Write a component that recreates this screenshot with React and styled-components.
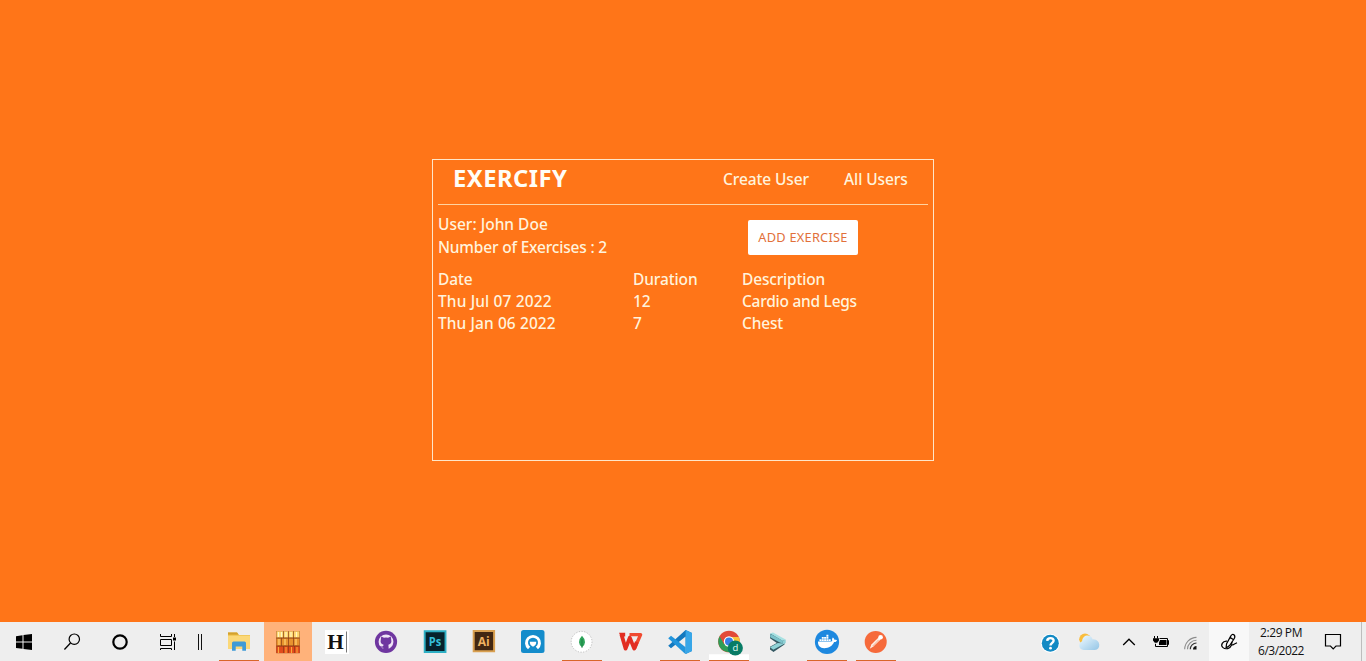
import React from "react";
import styled, { createGlobalStyle } from "styled-components";
import { FaDocker } from "react-icons/fa";

const GlobalStyle = createGlobalStyle`
  * { box-sizing: border-box; }
  body { margin: 0; background: #ff7518; overflow: hidden; }
  svg { display: block; }
`;

const Screen = styled.div`
  display: flex;
  flex-direction: column;
  width: 1366px;
  height: 661px;
  background: #ff7518;
  font-family: "Noto Sans", "Open Sans", sans-serif;
`;

const Page = styled.main`
  flex: 1;
  display: flex;
  justify-content: center;
  padding-top: 159px;
`;

const Card = styled.section`
  width: 502px;
  height: 302px;
  padding: 0 5px;
  border: 1px solid #ffe6c8;
  color: #fff3dc;
  font-size: 15.5px;
  font-weight: 500;
`;

const Header = styled.header`
  display: flex;
  align-items: center;
  height: 45px;
  padding: 0 20px 0 15px;
  border-bottom: 1px solid #ffd3a0;
`;

const Brand = styled.h1`
  flex: 1;
  margin: 0;
  padding-bottom: 8px;
  color: #fffdf6;
  font-size: 23.8px;
  line-height: 32px;
  font-weight: 700;
  letter-spacing: 0.45px;
`;

const NavLink = styled.a`
  width: ${(p) => p.$width}px;
  padding-bottom: 6px;
  line-height: 22px;
  white-space: nowrap;
  letter-spacing: ${(p) => p.$track || 0}px;
`;

const Summary = styled.div`
  display: flex;
  height: 63px;
  padding-top: 8px;
`;

const Facts = styled.div`
  width: 310px;
`;

const Fact = styled.div`
  height: 23px;
  line-height: 23px;
  white-space: nowrap;
  letter-spacing: ${(p) => p.$track || 0}px;
`;

const AddButton = styled.button`
  width: 110px;
  height: 35px;
  margin-top: 7px;
  padding: 0 0 2px;
  border: 0;
  border-radius: 2px;
  background: #fff;
  color: #e2703a;
  font-family: inherit;
  font-size: 12.8px;
  letter-spacing: 0.24px;
  white-space: nowrap;
`;

const Table = styled.div`
  display: grid;
  grid-template-columns: 195px 109px 1fr;
  grid-auto-rows: 22px;
  line-height: 22px;
`;

const Cell = styled.span`
  white-space: nowrap;
  letter-spacing: ${(p) => p.$track || 0}px;
`;

const Taskbar = styled.footer`
  display: flex;
  height: 39px;
  background: #eeeeee;
`;

const SystemButtons = styled.div`
  display: flex;
  width: 215px;
`;

const Apps = styled.div`
  display: flex;
  gap: 1px;
  flex: 1;
`;

const Slot = styled.div`
  display: flex;
  justify-content: center;
  width: ${(p) => p.$width || 48}px;
  height: 39px;
  background: ${(p) => p.$bg || "transparent"};
`;

const AppSlot = styled(Slot)`
  background: ${(p) =>
    p.$active ? "#ffb27a" : p.$running ? "linear-gradient(#d9662a, #d9662a) center bottom / 40px 1px no-repeat" : "transparent"};
`;

const Tray = styled.div`
  display: flex;
`;

const Clock = styled.div`
  width: 64px;
  padding-top: 2px;
  font-family: "Open Sans", "Noto Sans", sans-serif;
  font-size: 12px;
  line-height: 18px;
  color: #111;
  text-align: center;
`;

const ClockLine = styled.div`
  white-space: nowrap;
  letter-spacing: ${(p) => p.$track || 0}px;
`;

const ShowDesktop = styled.div`
  width: 5px;
  border-left: 1px solid #bdbdbd;
`;

/* Every glyph shares one coordinate system whose origin is the slot centre. */
const Glyph = ({ w = 48, children }) => (
  <svg width={w} height="39" viewBox={`${-w / 2} -20 ${w} 39`} fill="none">
    {children}
  </svg>
);

const Start = () => (
  <Glyph>
    <path fill="#000" d="M-8-5.8-1.5-6.7V-.5H-8ZM-.5-6.9 8-8V-.5H-.5ZM-8 .5h6.5v6.3L-8 5.9ZM-.5.5H8V8L-.5 6.9Z" />
  </Glyph>
);

const Search = () => (
  <Glyph>
    <circle cx="2.3" cy="-2.8" r="5.2" stroke="#000" strokeWidth="1.2" />
    <path d="M-1.5 1-7.6 7.5" stroke="#000" strokeWidth="1.3" />
  </Glyph>
);

const Cortana = () => (
  <Glyph>
    <circle r="6.7" stroke="#000" strokeWidth="2.2" />
  </Glyph>
);

const TaskView = () => (
  <Glyph>
    <path d="M-7.5-8v2.5h11V-8M-7.5-2.5h11v6h-11ZM-7.5 8V6.5h11V8M6.5-8v3M6.5-.5V8" stroke="#000" strokeWidth="1" />
    <path d="M5-4.5h3v3H5Z" fill="#000" />
  </Glyph>
);

const Bars = () => (
  <Glyph w={16}>
    <path d="M-1.5-8V8M1.5-8V8" stroke="#111" strokeWidth="1" />
  </Glyph>
);

const Explorer = () => (
  <Glyph>
    <path d="M-11-9.5h9l2 2.5h11V6h-22Z" fill="#e8b73f" />
    <path d="M-11-6.5H11V7h-22Z" fill="#fbd878" />
    <path d="M-11-9.5h9l1.5 2h-10.5Z" fill="#d3a12e" />
    <path d="M-7 8.8V1q0-1.5 1.5-1.5h11Q7 -.5 7 1v7.8H3.3V4.5h-6.6v4.3Z" fill="#3f9bd6" />
  </Glyph>
);

const Archive = () => (
  <Glyph>
    <path d="M-11.8-10.8h23.6v22h-23.6Z" fill="#8a3a14" />
    <path d="M-11.5-10.8h6.8v6.3h-6.8ZM-4-10.8h4v6.3h-4ZM.7-10.8h4.6v6.3H.7ZM6-10.8h5.5v6.3H6Z" fill="#ffd66c" />
    <path d="M-11.5-3.4h4.8v6.8h-4.8ZM-6-3.4h6v6.8h-6ZM.7-3.4h4.6v6.8H.7ZM6-3.4h5.5v6.8H6Z" fill="#e8922f" />
    <path d="M-11.5 4.6h6.8v6.4h-6.8ZM-4 4.6h4V11h-4ZM.7 4.6h5.6V11H.7ZM7 4.6h4.5V11H7Z" fill="#e24a1c" />
    <path d="M-9.5-10v5M-6.5-10v5M-2-10v5M3-10v5M8.5-10v5" stroke="#fff4c2" strokeWidth="1.2" />
    <path d="M-9-3v6M-3-3v6M8-3v6" stroke="#ffd272" strokeWidth="1.2" />
    <path d="M-9.5 5v6M-2 5v6M3.5 5v6M9 5v6" stroke="#f9aa38" strokeWidth="1.1" />
  </Glyph>
);

const Hemingway = () => (
  <Glyph>
    <path d="M-12-12h24v24h-24Z" fill="#fff" />
    <text x="-9.8" y="7.4" fill="#111" fontFamily="Liberation Serif, serif" fontWeight="700" fontSize="21.5" textLength="16.5" lengthAdjust="spacingAndGlyphs">H</text>
    <path d="M9.5-10.5v21" stroke="#777" />
  </Glyph>
);

const GitHubDesktop = () => (
  <Glyph>
    <circle cy="-.2" r="11.1" fill="#6f36a0" />
    <circle cy="-.2" r="7.4" fill="#efe4f6" />
    <path d="M-4.8-5.5-2-4.2q2-.5 4 0l2.8-1.3.4 3.3Q6.2 1.6 2.4 2.7L2.8 8h-5.6V5.6q-2.8.6-3.6-1.8 1.6 1.4 3.6.2l.4-1.3q-3.8-1.1-2.8-4.9Z" fill="#6f36a0" />
  </Glyph>
);

const Photoshop = () => (
  <Glyph>
    <path d="M-10.3-10.8h20.8v20.8h-20.8Z" fill="#06222c" stroke="#2dafc4" strokeWidth="1.9" />
    <text x="-6.3" y="4" fill="#35bfd9" fontFamily="Open Sans, sans-serif" fontWeight="700" fontSize="11.5" textLength="12.5" lengthAdjust="spacingAndGlyphs">Ps</text>
  </Glyph>
);

const Illustrator = () => (
  <Glyph>
    <path d="M-10.3-11h20.4v20.2h-20.4Z" fill="#422712" stroke="#d9a050" strokeWidth="2" />
    <text x="-6.2" y="3.6" fill="#efb261" fontFamily="Open Sans, sans-serif" fontWeight="700" fontSize="12" textLength="12" lengthAdjust="spacingAndGlyphs">Ai</text>
  </Glyph>
);

const BlueApp = () => (
  <Glyph>
    <rect x="-12" y="-12" width="23.5" height="23" rx="2.5" fill="#148ccb" />
    <path d="M-5 7.2A8 8 0 1 1 5 7.2L2.8 4.8A5 5 0 1 0-2.8 4.8Z" fill="#fff" />
    <path d="M-3.2-.2h6.4q.3 3.4-3.2 4.9Q-3.5 3.2-3.2-.2Z" fill="#fff" />
  </Glyph>
);

const Mongo = () => (
  <Glyph>
    <circle cx="-.4" cy="-.2" r="10.4" fill="#fff" stroke="#a8a8a8" strokeWidth=".7" strokeDasharray="1.2 1.5" />
    <path d="M0-6.3Q3.3-3 3 .2 2.8 3.5 0 5.2-2.8 3.5-3 .2-3.3-3 0-6.3Z" fill="#2da45a" />
    <path d="M0-3V6" stroke="#16733b" strokeWidth=".7" />
  </Glyph>
);

const Wps = () => (
  <Glyph>
    <path d="M-1.5-7.4H9.6L3.6 6.3" stroke="#f04a30" strokeWidth="3.4" strokeLinejoin="round" />
    <path d="M-12-9.2h6.2v3.6h-4.6Z" fill="#e22d22" />
    <path d="M-9.6-7.6-5.4 6.6-1.2-4.2 3.2 6.6 5.8 0" stroke="#e22d22" strokeWidth="3.8" strokeLinejoin="round" />
  </Glyph>
);

const VsCode = () => (
  <Glyph>
    <path d="M5.6-12 12-9V9L5.6 12V-5.5L-9 6.2l-2.8-2.4Z" fill="#1479bf" />
    <path d="m-11.8-3.8L-9-6.2 5.6 5.2V12L4.5 11.2Z" fill="#2295dc" />
    <path d="M5.6-12 12-9V9L5.6 12Z" fill="#37a6e8" />
  </Glyph>
);

const Chrome = () => (
  <Glyph>
    <path d="M-20 12.3h40V18h-40Z" fill="#fff" />
    <circle cy="-.5" r="10.8" fill="#e24a38" />
    <path d="M-9.4-5.8A10.8 10.8 0 0 0 0 10.3L5 2H-5Z" fill="#2e9d57" />
    <path d="M9.8-5A10.8 10.8 0 0 1 0 10.3L4.6 2 0-5Z" fill="#f8c53c" />
    <circle cy="-.5" r="5.2" fill="#fff" />
    <circle cy="-.5" r="4" fill="#377fe5" />
    <circle cx="6.3" cy="6" r="7.6" fill="#087c66" />
    <text x="6.3" y="9.3" fill="#e5fff8" fontFamily="Open Sans, sans-serif" fontSize="9.5" textAnchor="middle">d</text>
  </Glyph>
);

const Terminal = () => (
  <Glyph>
    <path d="m-6.5-8.5 13 6.8v4.2L-4.5 10-8 7.6V4.8L-1.2 1-8-3.8V-8Z" fill="#355963" />
    <path d="M-7.8-8.6-5-9.4 7.7-2.6 4.8-1Z" fill="#a7e1e2" />
    <path d="m-7.8-8.2 12.6 7v2.8l-3-1L-7.8-4.8Z" fill="#7cc3cb" />
    <path d="M4.8-1 7.7-2.6V1L-4.7 7.7-8 5.2-.2 1l5 .5Z" fill="#8fd2d6" />
  </Glyph>
);

const Docker = () => (
  <Glyph>
    <circle cy="-.1" r="12.1" fill="#1d88df" />
    <FaDocker x="-9" y="-10" color="#fff" size="19" />
  </Glyph>
);

const Postman = () => (
  <Glyph>
    <circle cx="-.3" cy="-.1" r="11" fill="#f66a3b" />
    <path d="M-6.2 6.8-4.6 2.6 2.5-4.5 4.6-2.4-2.6 4.6Z" fill="#fff0e7" />
    <circle cx="4.6" cy="-4.7" r="2.3" fill="#fff" />
    <path d="m-3.5 4.2 6-6.2" stroke="#ee9b75" strokeWidth=".8" />
  </Glyph>
);

const Help = () => (
  <Glyph w={38}>
    <circle cx=".3" cy="1.3" r="9.6" fill="#fff" />
    <circle cx=".3" cy="1.3" r="8.5" fill="#138ac4" />
    <path d="M-2.8-1.2C-2.5-4.8 3.7-4.7 3.6-1.3 3.5.8.5 1 .5 3.6" stroke="#fff" strokeWidth="2.4" />
    <circle cx=".5" cy="6.2" r="1.4" fill="#fff" />
  </Glyph>
);

const Weather = () => (
  <Glyph w={40}>
    <defs>
      <linearGradient id="cloud" x1="0" y1="0" x2="1" y2="1">
        <stop stopColor="#f0faff" />
        <stop offset="1" stopColor="#93c5e6" />
      </linearGradient>
    </defs>
    <circle cx="-4" cy="-2.7" r="5.8" fill="#f9bd3d" />
    <path d="M-5.3 7.9C-10.8 7.7-10.9.4-6.9-.8-6.5-8 2.3-8 3.7-2.6 11.5-3.4 12.6 7.8 5.8 8.1Z" fill="url(#cloud)" />
  </Glyph>
);

const Chevron = () => (
  <Glyph w={40}>
    <path d="M-5.8 3 0-2.8 5.8 3" stroke="#000" strokeWidth="1.3" />
  </Glyph>
);

const Battery = () => (
  <Glyph w={24}>
    <path d="M-1.5-3.5h8v8h-9.5M6.5-1.5h1v4h-1M-2.5 4.5h-3V1.8" stroke="#000" strokeWidth="1" />
    <path d="M-1-2h6.5v5h-7.5V.5ZM-8-3.8h6v2.2l-1.8 2.3h-2.4L-8-1.6Z" fill="#000" />
    <path d="M-6.5-6v2.5M-3.5-6v2.5" stroke="#000" />
  </Glyph>
);

const Wifi = () => (
  <Glyph w={36}>
    <path d="M-6.3 7.2A12 12 0 0 1 5.5-4.6M-3.5 7.2A9 9 0 0 1 5.5-1.7" stroke="#8c8c8c" strokeWidth="1.1" />
    <path d="M-.7 7.2A6.2 6.2 0 0 1 5.5 1" stroke="#333" strokeWidth="1.2" />
    <path d="M2 7.5A3.5 3.5 0 0 1 5.5 4v3.5Z" fill="#111" />
  </Glyph>
);

const Pen = () => (
  <Glyph w={40}>
    <path d="M-3 6-2.4 1.6 1.6-5.6Q3.2-8.6 5.2-7 6.6-5.4 5-3L.6 3.6-3 6M1.2-4.6 4.6-2.2" stroke="#000" strokeWidth="1.2" />
    <path d="M-2-.9C-6.6-1.4-8.8 3.4-6 5.6-3.6 7.6 1 7.2 3 2.6M3-.2q-1 3.6.8 3.1Q6 1.6 8 .7" stroke="#000" strokeWidth="1.2" />
  </Glyph>
);

const Notifications = () => (
  <Glyph w={40}>
    <path d="M-7.5-7.5h15v11.5H3L.2 6.9 -2.5 4h-5Z" stroke="#000" strokeWidth="1.2" />
  </Glyph>
);

const APPS = [
  { id: "explorer", Icon: Explorer, running: true },
  { id: "archive", Icon: Archive, active: true },
  { id: "hemingway", Icon: Hemingway },
  { id: "github", Icon: GitHubDesktop },
  { id: "photoshop", Icon: Photoshop },
  { id: "illustrator", Icon: Illustrator },
  { id: "blue", Icon: BlueApp },
  { id: "mongo", Icon: Mongo, running: true },
  { id: "wps", Icon: Wps },
  { id: "vscode", Icon: VsCode, running: true },
  { id: "chrome", Icon: Chrome, running: true },
  { id: "terminal", Icon: Terminal },
  { id: "docker", Icon: Docker, running: true },
  { id: "postman", Icon: Postman, running: true },
];

export default function App() {
  return (
    <Screen>
      <GlobalStyle />
      <Page>
        <Card>
          <Header>
            <Brand>EXERCIFY</Brand>
            <NavLink $width={121} $track={-0.1}>Create User</NavLink>
            <NavLink $width={64} $track={-0.1}>All Users</NavLink>
          </Header>
          <Summary>
            <Facts>
              <Fact>User: John Doe</Fact>
              <Fact $track={-0.19}>Number of Exercises : 2</Fact>
            </Facts>
            <AddButton>ADD EXERCISE</AddButton>
          </Summary>
          <Table>
            <Cell $track={-0.1}>Date</Cell>
            <Cell $track={-0.12}>Duration</Cell>
            <Cell $track={-0.17}>Description</Cell>
            <Cell $track={0.12}>Thu Jul 07 2022</Cell>
            <Cell>12</Cell>
            <Cell $track={-0.26}>Cardio and Legs</Cell>
            <Cell $track={0.08}>Thu Jan 06 2022</Cell>
            <Cell>7</Cell>
            <Cell $track={-0.17}>Chest</Cell>
          </Table>
        </Card>
      </Page>
      <Taskbar>
        <SystemButtons>
          <Slot><Start /></Slot>
          <Slot><Search /></Slot>
          <Slot><Cortana /></Slot>
          <Slot><TaskView /></Slot>
          <Slot $width={16}><Bars /></Slot>
        </SystemButtons>
        <Apps>
          {APPS.map(({ id, Icon, running, active }) => (
            <AppSlot key={id} $running={running} $active={active}>
              <Icon />
            </AppSlot>
          ))}
        </Apps>
        <Tray>
          <Slot $width={38}><Help /></Slot>
          <Slot $width={40}><Weather /></Slot>
          <Slot $width={40}><Chevron /></Slot>
          <Slot $width={24}><Battery /></Slot>
          <Slot $width={36}><Wifi /></Slot>
          <Slot $width={40} $bg="#f8f8f8"><Pen /></Slot>
          <Clock>
            <ClockLine $track={-0.4}>2:29 PM</ClockLine>
            <ClockLine $track={-0.5}>6/3/2022</ClockLine>
          </Clock>
          <Slot $width={40}><Notifications /></Slot>
          <Slot $width={8} />
          <ShowDesktop />
        </Tray>
      </Taskbar>
    </Screen>
  );
}
